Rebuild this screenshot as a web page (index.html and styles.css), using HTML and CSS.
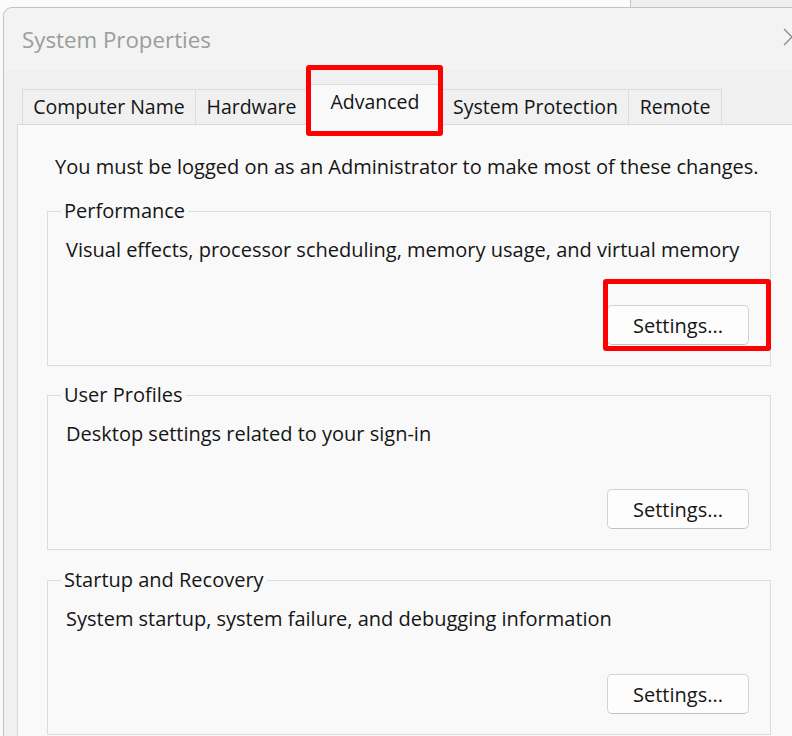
FILE: index.html
```html
<!DOCTYPE html>
<html lang="en">
<head>
<meta charset="utf-8">
<title>System Properties</title>
<link rel="stylesheet" href="styles.css">
</head>
<body>
<div class="strip"><div class="strip-left"></div><div class="strip-right"></div></div>
<div class="dialog">
  <div class="titlebar">
    <span class="title">System Properties</span>
    <svg class="close" width="18" height="18" viewBox="0 0 18 18"><path d="M1 1 L17 17 M17 1 L1 17" stroke="#8c8c8c" stroke-width="1.4" fill="none"/></svg>
  </div>
  <div class="client">
    <div class="tabs">
      <div class="tab tab-cn">Computer Name</div>
      <div class="tab tab-hw">Hardware</div>
      <div class="tab tab-adv selected">Advanced<span class="mark mark-tab"></span></div>
      <div class="tab tab-sp">System Protection</div>
      <div class="tab tab-rm">Remote</div>
    </div>
    <div class="panel">
      <p class="note">You must be logged on as an Administrator to make most of these changes.</p>
      <fieldset class="group">
        <legend>Performance</legend>
        <p class="desc">Visual effects, processor scheduling, memory usage, and virtual memory</p>
        <div class="actions"><button class="btn">Settings...<span class="mark mark-btn"></span></button></div>
      </fieldset>
      <fieldset class="group">
        <legend>User Profiles</legend>
        <p class="desc">Desktop settings related to your sign-in</p>
        <div class="actions"><button class="btn">Settings...</button></div>
      </fieldset>
      <fieldset class="group">
        <legend>Startup and Recovery</legend>
        <p class="desc">System startup, system failure, and debugging information</p>
        <div class="actions"><button class="btn">Settings...</button></div>
      </fieldset>
    </div>
  </div>
</div>
</body>
</html>
```
FILE: styles.css
```css
html, body {
  margin: 0;
  padding: 0;
}
body {
  width: 792px;
  height: 736px;
  overflow: hidden;
  background: #fafafa;
  font-family: "Open Sans", "Liberation Sans", sans-serif;
  font-size: 20px;
  color: #151515;
}
.strip {
  display: flex;
  height: 7px;
}
.strip-left {
  width: 630px;
  background: #fbfbfb;
  border-right: 1px solid #c8c8c8;
}
.strip-right {
  flex: 1;
  background: #eeeeee;
}
.dialog {
  margin-left: 3px;
  width: 840px;
  box-sizing: border-box;
  border: 1px solid #c3c3c3;
  border-bottom: none;
  border-radius: 9px 9px 0 0;
  background: #f0f0f0;
  height: 760px;
}
.titlebar {
  height: 62px;
  display: flex;
  align-items: center;
  padding: 0 41px 0 18px;
  background: #f3f3f3;
  border-radius: 9px 9px 0 0;
}
.title {
  font-size: 22.3px;
  color: #9c9c9c;
}
.close {
  margin-left: auto;
  margin-top: -4px;
}
.client {
  padding: 18px 41px 0 13px;
}
.tabs {
  display: flex;
  align-items: flex-end;
  padding-left: 5px;
  height: 36px;
  position: relative;
  z-index: 1;
}
.tab {
  box-sizing: border-box;
  height: 35px;
  line-height: 33px;
  text-align: center;
  border: 1px solid #dcdcdc;
  border-bottom: none;
  background: #f0f0f0;
  margin-left: -1px;
  white-space: nowrap;
  font-size: 19.5px;
}
.tab-cn { width: 174px; margin-left: 0; }
.tab-hw { width: 113px; }
.tab-adv { width: 136px; }
.tab-sp { width: 187px; }
.tab-rm { width: 94px; }
.tab.selected {
  position: relative;
  height: 41px;
  line-height: 33px;
  margin-bottom: -1px;
  background: #f9f9f9;
  z-index: 2;
}
.mark {
  position: absolute;
  border: 5px solid #ff0000;
  border-radius: 3px;
  pointer-events: none;
}
.mark-tab {
  top: -20px;
  bottom: -11px;
  left: -2px;
  right: -1px;
}
.panel {
  background: #f9f9f9;
  border: 1px solid #d9d9d9;
  padding: 30px 29px 0 29px;
  height: 700px;
}
.note {
  margin: 0 0 0 8px;
  line-height: 24px;
  white-space: nowrap;
}
.group {
  margin: 17px 0 0 0;
  padding: 0 21px 20px 18px;
  border: 1px solid #dcdcdc;
  min-width: 0;
}
.group:first-of-type {
  margin-top: 20px;
}
.group:last-of-type {
  margin-top: 18px;
}
.group legend {
  margin-left: -5px;
  padding: 0 3px;
  line-height: 24px;
}
.desc {
  margin: 15px 0 0 0;
  line-height: 24px;
  white-space: nowrap;
}
.actions {
  display: flex;
  justify-content: flex-end;
  margin-top: 43px;
}
.btn {
  position: relative;
  width: 142px;
  height: 40px;
  box-sizing: border-box;
  background: #fdfdfd;
  border: 1px solid #d3d3d3;
  border-bottom-color: #c2c2c2;
  border-radius: 5px;
  font-family: inherit;
  font-size: 20px;
  color: #151515;
  padding: 0;
}
.mark-btn {
  top: -27px;
  bottom: -7px;
  left: -5px;
  right: -23px;
}
```
